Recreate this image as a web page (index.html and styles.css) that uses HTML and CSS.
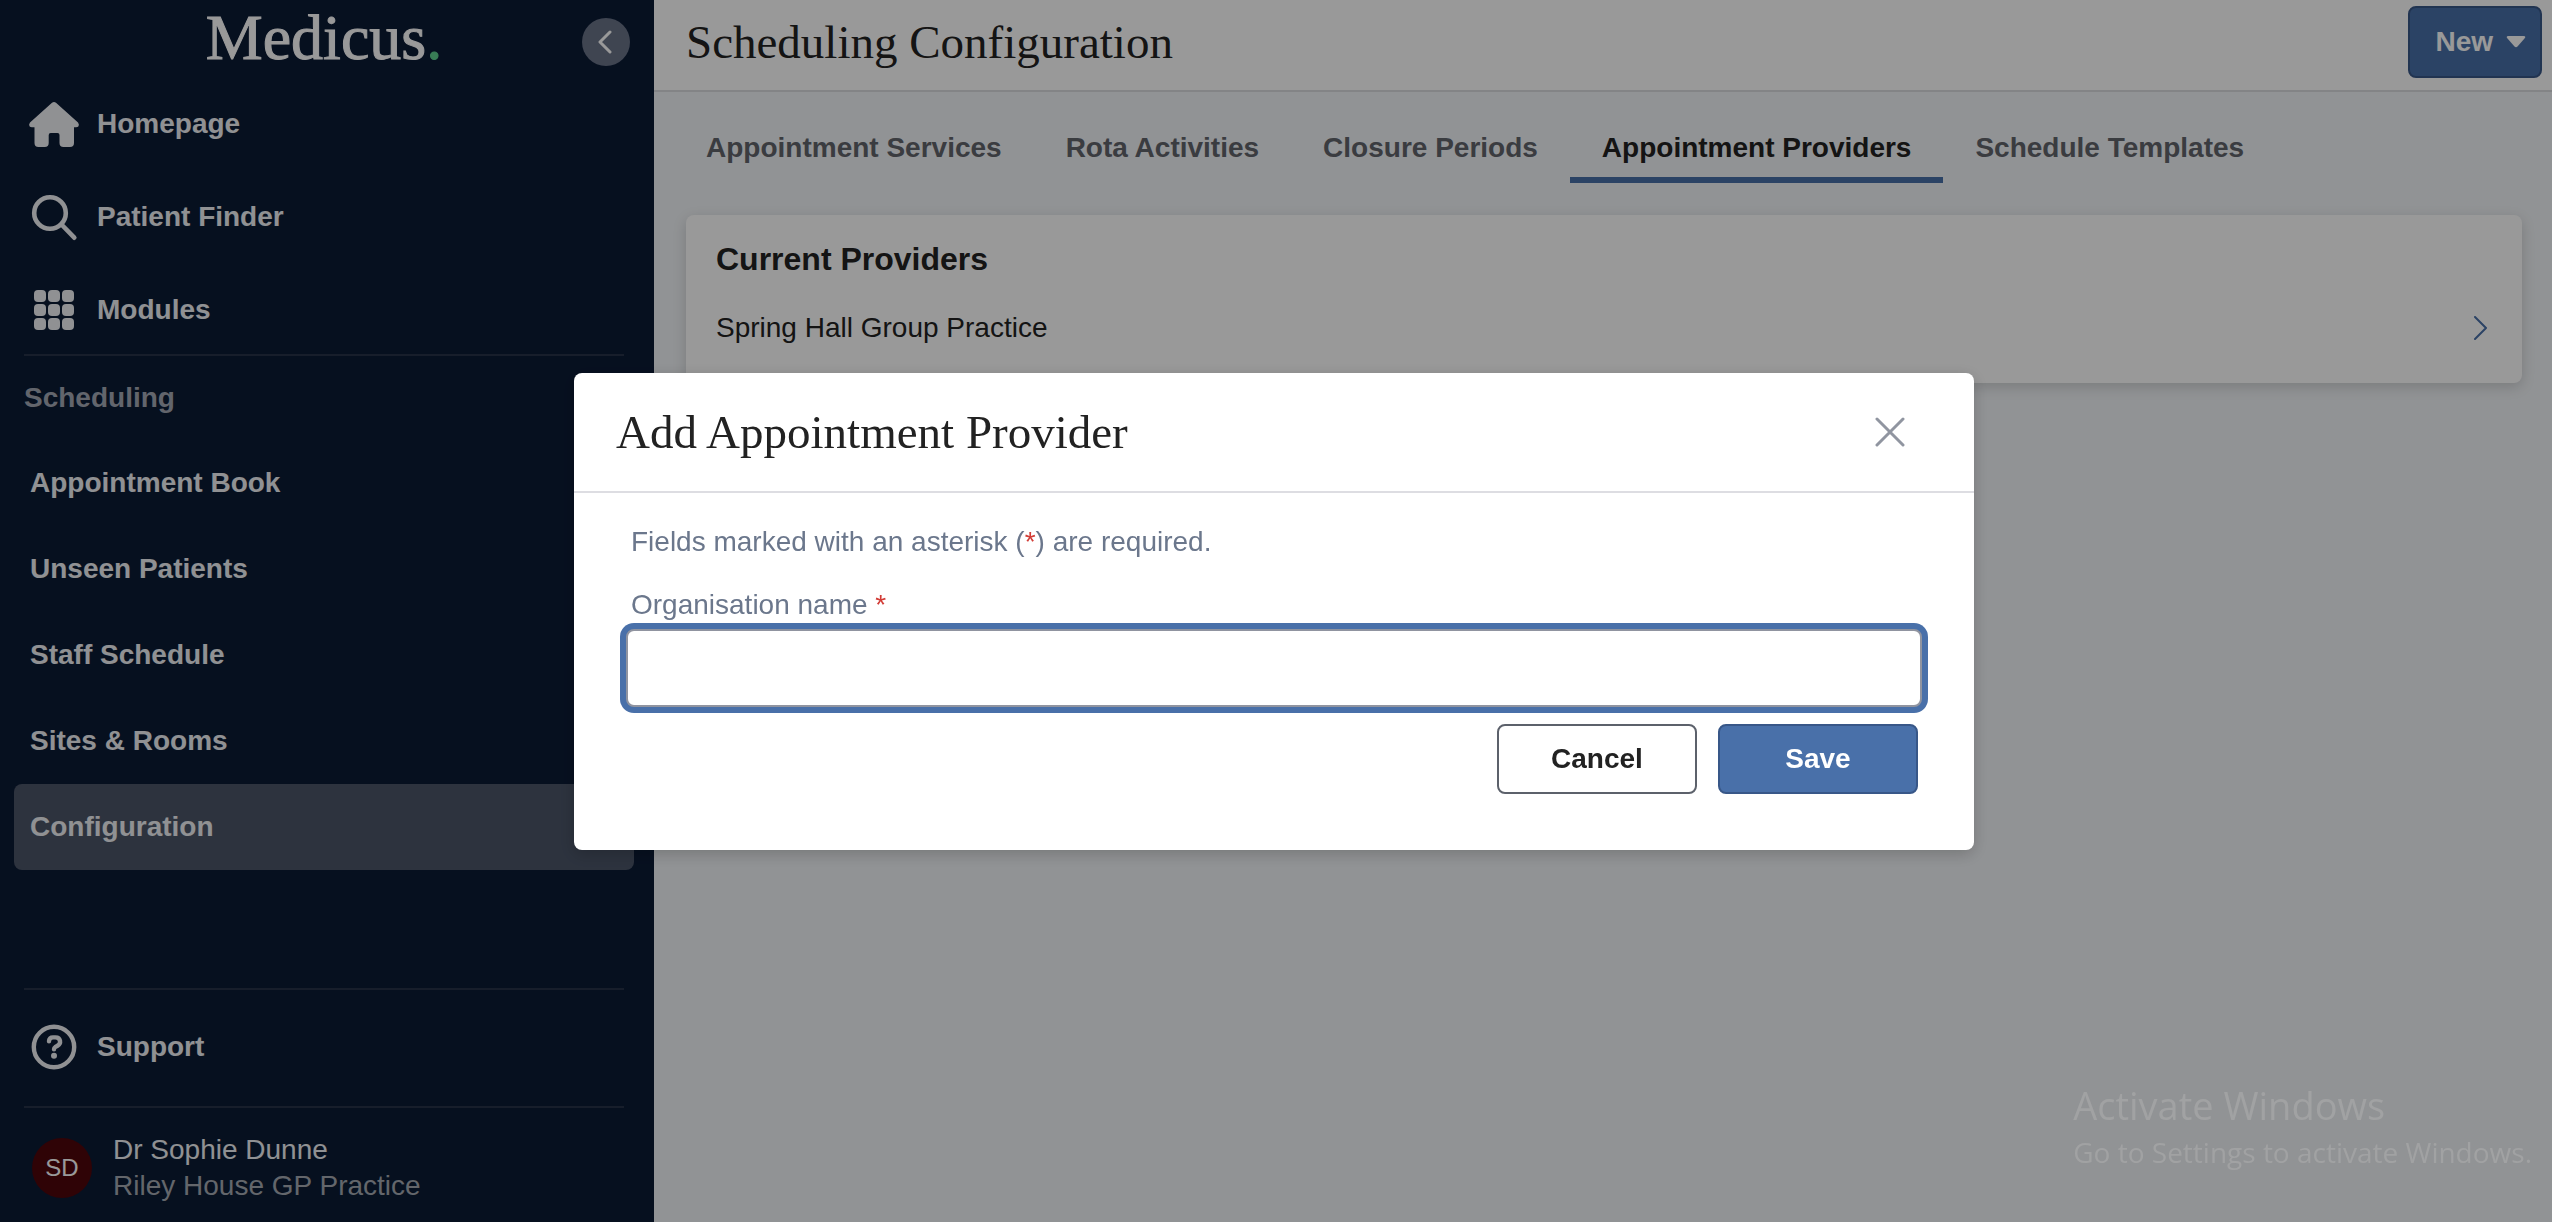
FILE: index.html
```html
<!DOCTYPE html>
<html lang="en">
<head>
  <meta charset="UTF-8" />
  <meta name="viewport" content="width=device-width, initial-scale=1.0" />
  <title>Scheduling Configuration</title>
  <link rel="stylesheet" href="styles.css">
</head>
<body>
  <div class="app">
    <aside class="sidebar">
      <div class="brand">
        <a class="logo" href="#">Medicus<span class="logo-dot">.</span></a>
        <button class="collapse" type="button" aria-label="Collapse menu">
          <svg width="24" height="24" viewBox="0 0 24 24" fill="none" stroke="currentColor" stroke-width="3" stroke-linecap="round" stroke-linejoin="round"><path d="M16 2 6 12l10 10"/></svg>
        </button>
      </div>

      <nav class="main-nav">
        <a class="nav-item" href="#">
          <svg class="icon" viewBox="0 0 50 50" fill="currentColor"><path d="M23 3.800Q25 2.200 27 3.800L49 23.500Q50.500 25.500 49.500 27.200Q48.800 28.200 47 28.200H45V44Q45 48 41 48H34.500Q30.500 48 30.500 44V36Q30.500 34 28.500 34H21.700Q19.700 34 19.700 36V44Q19.700 48 15.700 48H9.500Q5.500 48 5.500 44V28.200H3Q1.200 28.200 .500 27.200Q-.500 25.500 1 23.500Z"/></svg>
          Homepage
        </a>
        <a class="nav-item" href="#">
          <svg class="icon" viewBox="0 0 50 50" fill="none" stroke="currentColor" stroke-width="4.600" stroke-linecap="round"><circle cx="21" cy="21" r="15.800"/><path d="M32.500 32.500 45.300 45.700"/></svg>
          Patient Finder
        </a>
        <a class="nav-item" href="#">
          <svg class="icon" viewBox="0 0 50 50" fill="currentColor">
            <rect x="5" y="5" width="12" height="12" rx="4"/><rect x="19" y="5" width="12" height="12" rx="4"/><rect x="33" y="5" width="12" height="12" rx="4"/>
            <rect x="5" y="19" width="12" height="12" rx="4"/><rect x="19" y="19" width="12" height="12" rx="4"/><rect x="33" y="19" width="12" height="12" rx="4"/>
            <rect x="5" y="33" width="12" height="12" rx="4"/><rect x="19" y="33" width="12" height="12" rx="4"/><rect x="33" y="33" width="12" height="12" rx="4"/>
          </svg>
          Modules
        </a>
      </nav>

      <nav class="sub-nav">
        <h2>Scheduling</h2>
        <a href="#">Appointment Book</a>
        <a href="#">Unseen Patients</a>
        <a href="#">Staff Schedule</a>
        <a href="#">Sites &amp; Rooms</a>
        <a class="active" href="#">Configuration</a>
      </nav>

      <div class="sidebar-footer">
        <a class="nav-item support" href="#">
          <svg class="icon" viewBox="0 0 50 50" fill="none" stroke="currentColor" stroke-width="4.400" stroke-linecap="round"><circle cx="25" cy="25" r="20.200"/><path d="M20 19.200C20 16.500 21.500 15.400 24 15.400H26.500C31.800 15.400 32.500 21.500 28.500 23.700L26.500 24.800C25.400 25.500 25 26.200 25 27.300"/><circle cx="25" cy="33.700" r="3" fill="currentColor" stroke="none"/></svg>
          Support
        </a>
        <div class="user">
          <span class="avatar">SD</span>
          <div>
            <div>Dr Sophie Dunne</div>
            <div class="practice">Riley House GP Practice</div>
          </div>
        </div>
      </div>
    </aside>

    <main class="content">
      <header class="page-header">
        <h1>Scheduling Configuration</h1>
        <button class="btn blue new-btn" type="button">
          New
          <svg width="20" height="12" viewBox="0 0 20 12" fill="currentColor"><path d="M2.500 0H17.500Q20.500 0 18.500 2.500L11.500 10.500Q10 12 8.500 10.500L1.500 2.500Q-.5 0 2.500 0Z"/></svg>
        </button>
      </header>

      <nav class="tabs">
        <a href="#">Appointment Services</a>
        <a href="#">Rota Activities</a>
        <a href="#">Closure Periods</a>
        <a class="active" href="#">Appointment Providers</a>
        <a href="#">Schedule Templates</a>
      </nav>

      <section class="card">
        <h2>Current Providers</h2>
        <a class="provider" href="#">
          Spring Hall Group Practice
          <svg width="14" height="24" viewBox="0 0 14 24" fill="none" stroke="currentColor" stroke-width="2" stroke-linecap="round" stroke-linejoin="round"><path d="M1 1 12 12 1 23"/></svg>
        </a>
      </section>
    </main>
  </div>

  <div class="overlay">
    <div class="modal" role="dialog" aria-modal="true" aria-labelledby="modalTitle">
      <div class="modal-header">
        <h2 id="modalTitle">Add Appointment Provider</h2>
        <button class="close" type="button" aria-label="Close">
          <svg width="30" height="30" viewBox="0 0 30 30" fill="none" stroke="currentColor" stroke-width="3" stroke-linecap="round"><path d="M2 2 28 28M28 2 2 28"/></svg>
        </button>
      </div>
      <form class="modal-body">
        <p>Fields marked with an asterisk (<span class="required">*</span>) are required.</p>
        <label for="orgName">Organisation name <span class="required">*</span></label>
        <input id="orgName" type="text" required>
        <div class="actions">
          <button class="btn outline" type="button">Cancel</button>
          <button class="btn blue" type="submit">Save</button>
        </div>
      </form>
    </div>
  </div>

  <div class="watermark">
    <div class="watermark-title">Activate Windows</div>
    <div>Go to Settings to activate Windows.</div>
  </div>
</body>
</html>
```
FILE: styles.css
```css
* {
  box-sizing: border-box;
}

body {
  margin: 0;
  font-family: "Liberation Sans", Arial, sans-serif;
  font-size: 28px;
  line-height: 36px;
  color: #222222;
  overflow: hidden;
}

a {
  color: inherit;
  text-decoration: none;
}

h1, h2, p {
  margin: 0;
}

button, input {
  font: inherit;
}

svg {
  display: block;
  flex: none;
}

.app {
  display: flex;
  min-height: 100vh;
  background: #f2f5f8;
}

/* Sidebar */

.sidebar {
  width: 654px;
  flex: none;
  display: flex;
  flex-direction: column;
  background: #0b1b35;
  color: #f0f2f5;
}

.brand {
  display: grid;
  grid-template-columns: 48px 1fr 48px;
  align-items: center;
  height: 84px;
  padding: 0 24px 0 18px;
}

.logo {
  grid-column: 2;
  align-self: start;
  text-align: center;
  font-family: "Liberation Serif", serif;
  font-size: 64px;
  line-height: 76px;
  color: #ffffff;
  -webkit-text-stroke: 1px;
}

.logo-dot {
  color: #5fd090;
}

.collapse {
  display: flex;
  align-items: center;
  justify-content: center;
  width: 48px;
  height: 48px;
  padding: 0;
  border: none;
  border-radius: 50%;
  background: #697388;
  color: #ffffff;
  cursor: pointer;
}

.main-nav {
  display: flex;
  flex-direction: column;
  gap: 31px;
  margin: 9px 30px 0 24px;
  padding-bottom: 13px;
  border-bottom: 2px solid #273249;
}

.nav-item {
  display: flex;
  align-items: center;
  gap: 18px;
  height: 62px;
  padding-left: 5px;
  font-weight: bold;
}

.icon {
  width: 50px;
  height: 50px;
  overflow: visible;
}

.sub-nav {
  padding: 0 20px 0 14px;
}

.sub-nav h2 {
  padding-left: 10px;
  font-size: 28px;
  line-height: 84px;
  color: #a3a9b5;
}

.sub-nav a {
  display: block;
  padding-left: 16px;
  line-height: 86px;
  font-weight: bold;
  border-radius: 8px;
}

.sub-nav .active {
  background: #4b5568;
}

.sidebar-footer {
  margin: auto 30px 0 24px;
  border-top: 2px solid #273249;
}

.support {
  height: 118px;
  padding-bottom: 2px;
  border-bottom: 2px solid #273249;
}

.user {
  display: flex;
  align-items: center;
  gap: 21px;
  padding: 24px 8px 18px;
}

.avatar {
  width: 60px;
  border-radius: 50%;
  background: #4f050b;
  color: #ffffff;
  font-size: 24px;
  line-height: 60px;
  text-align: center;
}

.practice {
  color: #a5abb3;
}

/* Page */

.content {
  flex: 1;
}

.page-header {
  display: flex;
  align-items: center;
  justify-content: space-between;
  padding: 6px 10px 12px 32px;
  background: #ffffff;
  border-bottom: 2px solid #dadcdf;
}

h1, .modal-header h2 {
  font-family: "Liberation Serif", serif;
  font-size: 47px;
  font-weight: normal;
  line-height: 56px;
}

.btn {
  width: 200px;
  height: 70px;
  padding: 0;
  border: 2px solid;
  border-radius: 8px;
  font-weight: bold;
  cursor: pointer;
}

.blue {
  background: #4970a9;
  border-color: #385788;
  color: #ffffff;
}

.outline {
  background: #ffffff;
  border-color: #5c616b;
  color: #222222;
}

.new-btn {
  display: flex;
  align-items: center;
  justify-content: center;
  gap: 13px;
  width: auto;
  height: 72px;
  padding: 0 14px 0 25px;
}

.tabs {
  display: flex;
  padding: 38px 20px 0;
  font-weight: bold;
  color: #62646c;
}

.tabs a {
  padding: 0 32px 11px;
  border-bottom: 6px solid transparent;
}

.tabs .active {
  color: #222222;
  border-color: #4970a9;
}

.card {
  margin: 32px 30px 0 32px;
  padding: 26px 30px 23px;
  background: #ffffff;
  border-radius: 8px;
  box-shadow: 0 4px 14px rgba(0, 0, 0, 0.16);
}

.card h2 {
  font-size: 32px;
}

.provider {
  display: flex;
  align-items: center;
  justify-content: space-between;
  height: 64px;
  margin-top: 19px;
  padding-right: 4px;
}

.provider svg {
  color: #4970a9;
}

/* Modal */

.overlay {
  position: fixed;
  inset: 0;
  display: flex;
  align-items: center;
  justify-content: center;
  padding-right: 4px;
  background: rgba(0, 0, 0, 0.4);
}

.modal {
  width: 100%;
  max-width: 1400px;
  background: #ffffff;
  border-radius: 8px;
  box-shadow: 0 4px 16px rgba(0, 0, 0, 0.2);
}

.modal-header {
  display: flex;
  align-items: center;
  justify-content: space-between;
  height: 120px;
  padding: 0 64px 0 42px;
  border-bottom: 2px solid #dddde2;
}

.close {
  display: flex;
  align-items: center;
  justify-content: center;
  width: 40px;
  height: 40px;
  padding: 0;
  border: none;
  background: none;
  color: #9095a0;
  cursor: pointer;
}

.modal-body {
  padding: 31px 52px 56px;
}

.modal-body p, .modal-body label {
  display: block;
  padding-left: 5px;
  color: #6b778c;
}

.modal-body label {
  margin: 27px 0 6px;
}

.modal-body .required {
  color: #d23c36;
}

.modal-body input {
  display: block;
  width: 100%;
  height: 78px;
  padding: 0 16px;
  border: 2px solid #9094a0;
  border-radius: 8px;
  outline: none;
  box-shadow: 0 0 0 6px #4970a9;
}

.actions {
  display: flex;
  justify-content: flex-end;
  gap: 21px;
  margin-top: 17px;
  padding-right: 4px;
}

.watermark {
  position: fixed;
  right: 20px;
  bottom: 49px;
  font-family: "Open Sans", sans-serif;
  font-size: 28px;
  line-height: 42px;
  color: #a1a2a3;
  pointer-events: none;
}

.watermark-title {
  font-size: 38px;
  line-height: 52px;
}
```
